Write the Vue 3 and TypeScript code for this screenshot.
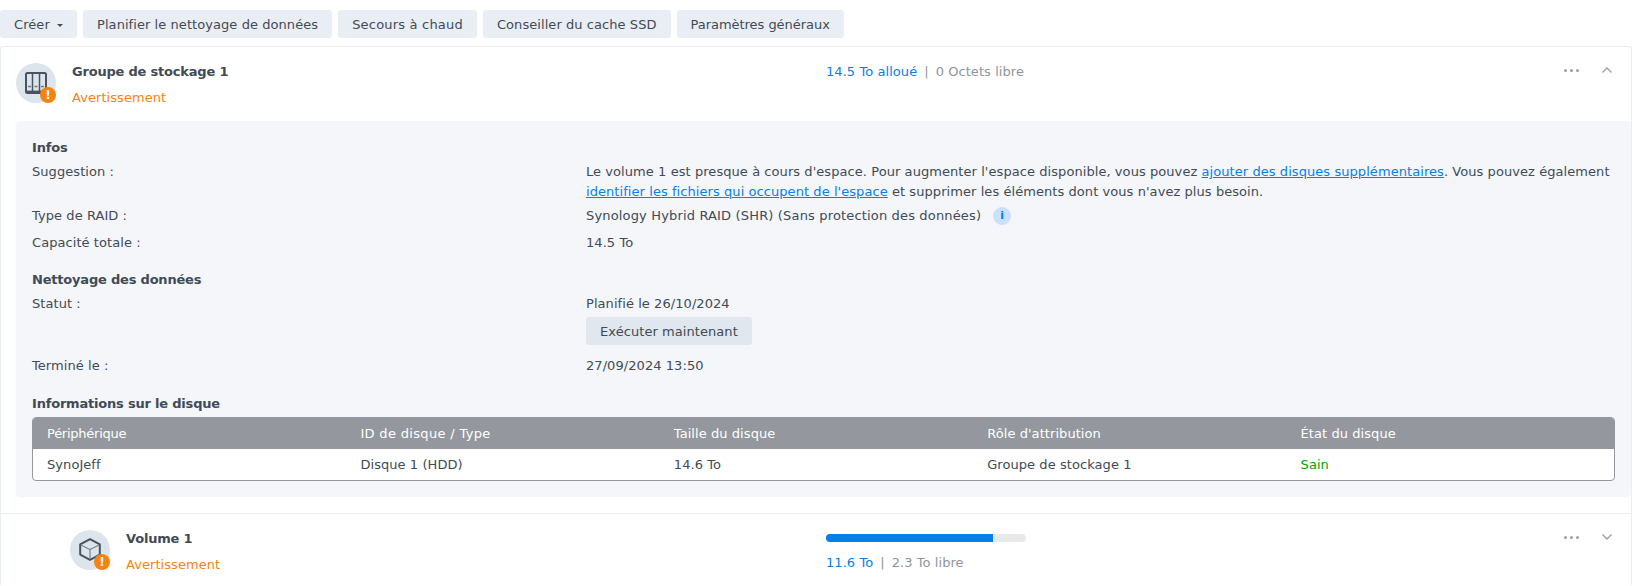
<script setup lang="ts">
const toolbar = ['Planifier le nettoyage de données', 'Secours à chaud', 'Conseiller du cache SSD', 'Paramètres généraux']
const columns = ['Périphérique', 'ID de disque / Type', 'Taille du disque', "Rôle d'attribution", 'État du disque']
const usedPercent = 83.5
</script>

<template>
  <div class="page">
    <div class="toolbar">
      <button class="btn">Créer <span class="caret"></span></button>
      <button v-for="label in toolbar" :key="label" class="btn">{{ label }}</button>
    </div>

    <div class="card">
      <div class="head">
        <div class="who">
          <div class="icon">
            <svg width="22" height="22" viewBox="0 0 22 22">
              <rect x="1" y="1" width="20" height="20" rx="1.500" fill="none" stroke="#4a5260" stroke-width="2" />
              <path d="M7.500 1v20M14.500 1v20" stroke="#4a5260" stroke-width="1.500" />
              <path d="M3 14.500h3M9.500 14.500h3M16 14.500h3" stroke="#6f7884" stroke-width="1.500" />
              <path d="M1 19.800h20" stroke="#4a5260" stroke-width="2.400" />
            </svg>
            <span class="warn">!</span>
          </div>
          <div class="titles">
            <div class="name">Groupe de stockage 1</div>
            <div class="status">Avertissement</div>
          </div>
        </div>
        <div class="usage usage-top"><span class="blue">14.5 To alloué</span><span class="sep">|</span><span class="grey">0 Octets libre</span></div>
        <div class="actions">
          <span class="dots"><i></i><i></i><i></i></span>
          <svg class="chev" width="12" height="8" viewBox="0 0 12 8"><path d="M1.500 6.500 6 2l4.500 4.500" fill="none" stroke="#9a9fa8" stroke-width="1.400" /></svg>
        </div>
      </div>

      <div class="panel">
        <div class="section">Infos</div>
        <div class="row suggestion">
          <div class="label">Suggestion :</div>
          <div class="value">Le volume 1 est presque à cours d'espace. Pour augmenter l'espace disponible, vous pouvez <a>ajouter des disques supplémentaires</a>. Vous pouvez également <a>identifier les fichiers qui occupent de l'espace</a> et supprimer les éléments dont vous n'avez plus besoin.</div>
        </div>
        <div class="row raid">
          <div class="label">Type de RAID :</div>
          <div class="value">Synology Hybrid RAID (SHR) (Sans protection des données)<span class="info">i</span></div>
        </div>
        <div class="row capacity">
          <div class="label">Capacité totale :</div>
          <div class="value">14.5 To</div>
        </div>

        <div class="section scrub">Nettoyage des données</div>
        <div class="row">
          <div class="label">Statut :</div>
          <div class="value">
            <div>Planifié le 26/10/2024</div>
            <button class="btn run">Exécuter maintenant</button>
          </div>
        </div>
        <div class="row finished">
          <div class="label">Terminé le :</div>
          <div class="value">27/09/2024 13:50</div>
        </div>

        <div class="section disks">Informations sur le disque</div>
        <div class="table">
          <div class="tr th">
            <div v-for="c in columns" :key="c">{{ c }}</div>
          </div>
          <div class="tr td">
            <div>SynoJeff</div>
            <div>Disque 1 (HDD)</div>
            <div>14.6 To</div>
            <div>Groupe de stockage 1</div>
            <div class="ok">Sain</div>
          </div>
        </div>
      </div>

      <div class="head volume">
        <div class="who">
          <div class="icon">
            <svg class="cube" width="22" height="23" viewBox="0 0 22 23">
              <path d="M11 1.200 20.800 6.400v10.200L11 21.800 1.200 16.600V6.400z" fill="none" stroke="#4a5260" stroke-width="2" stroke-linejoin="round" />
              <path d="M2 7 11 11.500l9-4.500M11 11.500v9.500" fill="none" stroke="#7f8894" stroke-width="1.300" />
            </svg>
            <span class="warn">!</span>
          </div>
          <div class="titles">
            <div class="name">Volume 1</div>
            <div class="status">Avertissement</div>
          </div>
        </div>
        <div class="usage">
          <div class="bar"><div class="fill" :style="{ width: usedPercent + '%' }"></div></div>
          <div class="bar-text"><span class="blue">11.6 To</span><span class="sep">|</span><span class="grey">2.3 To libre</span></div>
        </div>
        <div class="actions">
          <span class="dots"><i></i><i></i><i></i></span>
          <svg class="chev" width="12" height="8" viewBox="0 0 12 8"><path d="M1.500 1.500 6 6l4.500-4.500" fill="none" stroke="#9a9fa8" stroke-width="1.400" /></svg>
        </div>
      </div>
    </div>
  </div>
</template>

<style scoped>
.page {
  height: 586px;
  overflow: hidden;
  background: #fff;
  font: 13px/20px "DejaVu Sans", sans-serif;
  letter-spacing: 0.066px;
  color: #414b55;
}

.toolbar {
  display: flex;
  gap: 6px;
  padding: 10px 0 8px;
}

.btn {
  height: 28px;
  padding: 1px 14px 0;
  border: 0;
  border-radius: 3px;
  background: #e9eef5;
  color: #414b55;
  font: inherit;
  letter-spacing: inherit;
}

.toolbar .btn:nth-child(3) {
  letter-spacing: 0.2px;
}

.toolbar .btn:nth-child(5) {
  letter-spacing: -0.04px;
}

.caret {
  display: inline-block;
  margin-left: 3px;
  vertical-align: 2px;
  border: 3.5px solid transparent;
  border-top-color: #414b55;
  border-bottom: 0;
}

.card {
  border: 1px solid #e9eef5;
  border-bottom: 0;
  border-radius: 3px 3px 0 0;
}

.head {
  display: flex;
  height: 74px;
  padding-top: 16px;
  box-sizing: border-box;
}

.who {
  display: flex;
  width: 825px;
  padding-left: 15px;
  box-sizing: border-box;
}

.icon {
  position: relative;
  display: flex;
  align-items: center;
  justify-content: center;
  flex: none;
  width: 40px;
  height: 40px;
  margin-right: 16px;
  border-radius: 50%;
  background: #dce5ec;
}

.cube {
  margin-top: -1px;
}

.warn {
  position: absolute;
  right: 0;
  bottom: 0;
  width: 16px;
  height: 16px;
  border-radius: 50%;
  background: #f8820f;
  color: #fff;
  font: bold 12px/16px "DejaVu Sans", sans-serif;
  text-align: center;
}

.titles {
  margin-top: -1px;
}

.name {
  font-weight: bold;
  letter-spacing: -0.2px;
}

.status {
  margin-top: 6px;
  color: #f8820f;
}

.usage {
  flex: 1;
}

.usage-top {
  margin-top: -1px;
}

.blue {
  color: #057feb;
}

.grey {
  color: #8f959c;
}

.sep {
  margin: 0 7px;
  color: #8f959c;
}

.actions {
  display: flex;
  align-items: center;
  gap: 22px;
  height: 20px;
  margin-top: -3px;
  padding-right: 18px;
}

.dots {
  display: flex;
  gap: 3px;
}

.dots i {
  width: 3px;
  height: 3px;
  border-radius: 50%;
  background: #9a9fa8;
}

.panel {
  margin-left: 15px;
  padding: 17px 16px 16px;
  border-radius: 4px;
  background: #f4f6fa;
}

.section {
  font-weight: bold;
  letter-spacing: -0.2px;
}

.row {
  display: flex;
}

.label {
  flex: none;
  width: 554px;
}

.value {
  flex: 1;
}

a {
  color: #057feb;
  text-decoration: underline;
}

.suggestion {
  margin-top: 4px;
}

.raid {
  margin-top: 4px;
}

.raid .value {
  display: flex;
  align-items: center;
  letter-spacing: 0.16px;
}

.info {
  display: inline-block;
  width: 18px;
  height: 18px;
  margin-left: 12px;
  border-radius: 50%;
  background: #c9e1fa;
  color: #057feb;
  font: bold 11px/18px "DejaVu Sans", sans-serif;
  text-align: center;
}

.capacity {
  margin-top: 7px;
}

.scrub {
  margin-top: 17px;
  margin-bottom: 4px;
}

.run {
  display: block;
  margin-top: 3px;
  background: #e0e7ee;
}

.finished {
  margin-top: 11px;
}

.disks {
  margin-top: 18px;
  margin-bottom: 3px;
}

.table {
  overflow: hidden;
  border: 1px solid #94989e;
  border-radius: 4px;
  background: #fff;
}

.tr {
  display: grid;
  grid-template-columns: repeat(5, 1fr);
  padding-left: 14px;
  align-items: center;
}

.th {
  height: 31px;
  background: #94989e;
  color: #fff;
}

.th div:nth-child(1) {
  letter-spacing: -0.25px;
}

.th div:nth-child(2) {
  letter-spacing: 0.33px;
}

.td {
  height: 31px;
}

.ok {
  color: #00a300;
}

.volume {
  margin-top: 16px;
  border-top: 1px solid #e9eef5;
  height: 72px;
}

.volume .who {
  padding-left: 69px;
}

.bar {
  width: 200px;
  height: 8px;
  margin-top: 4px;
  overflow: hidden;
  border-radius: 4px;
  background: #e8e9eb;
}

.fill {
  height: 100%;
  background: #057feb;
}

.bar-text {
  margin-top: 11px;
}
</style>
